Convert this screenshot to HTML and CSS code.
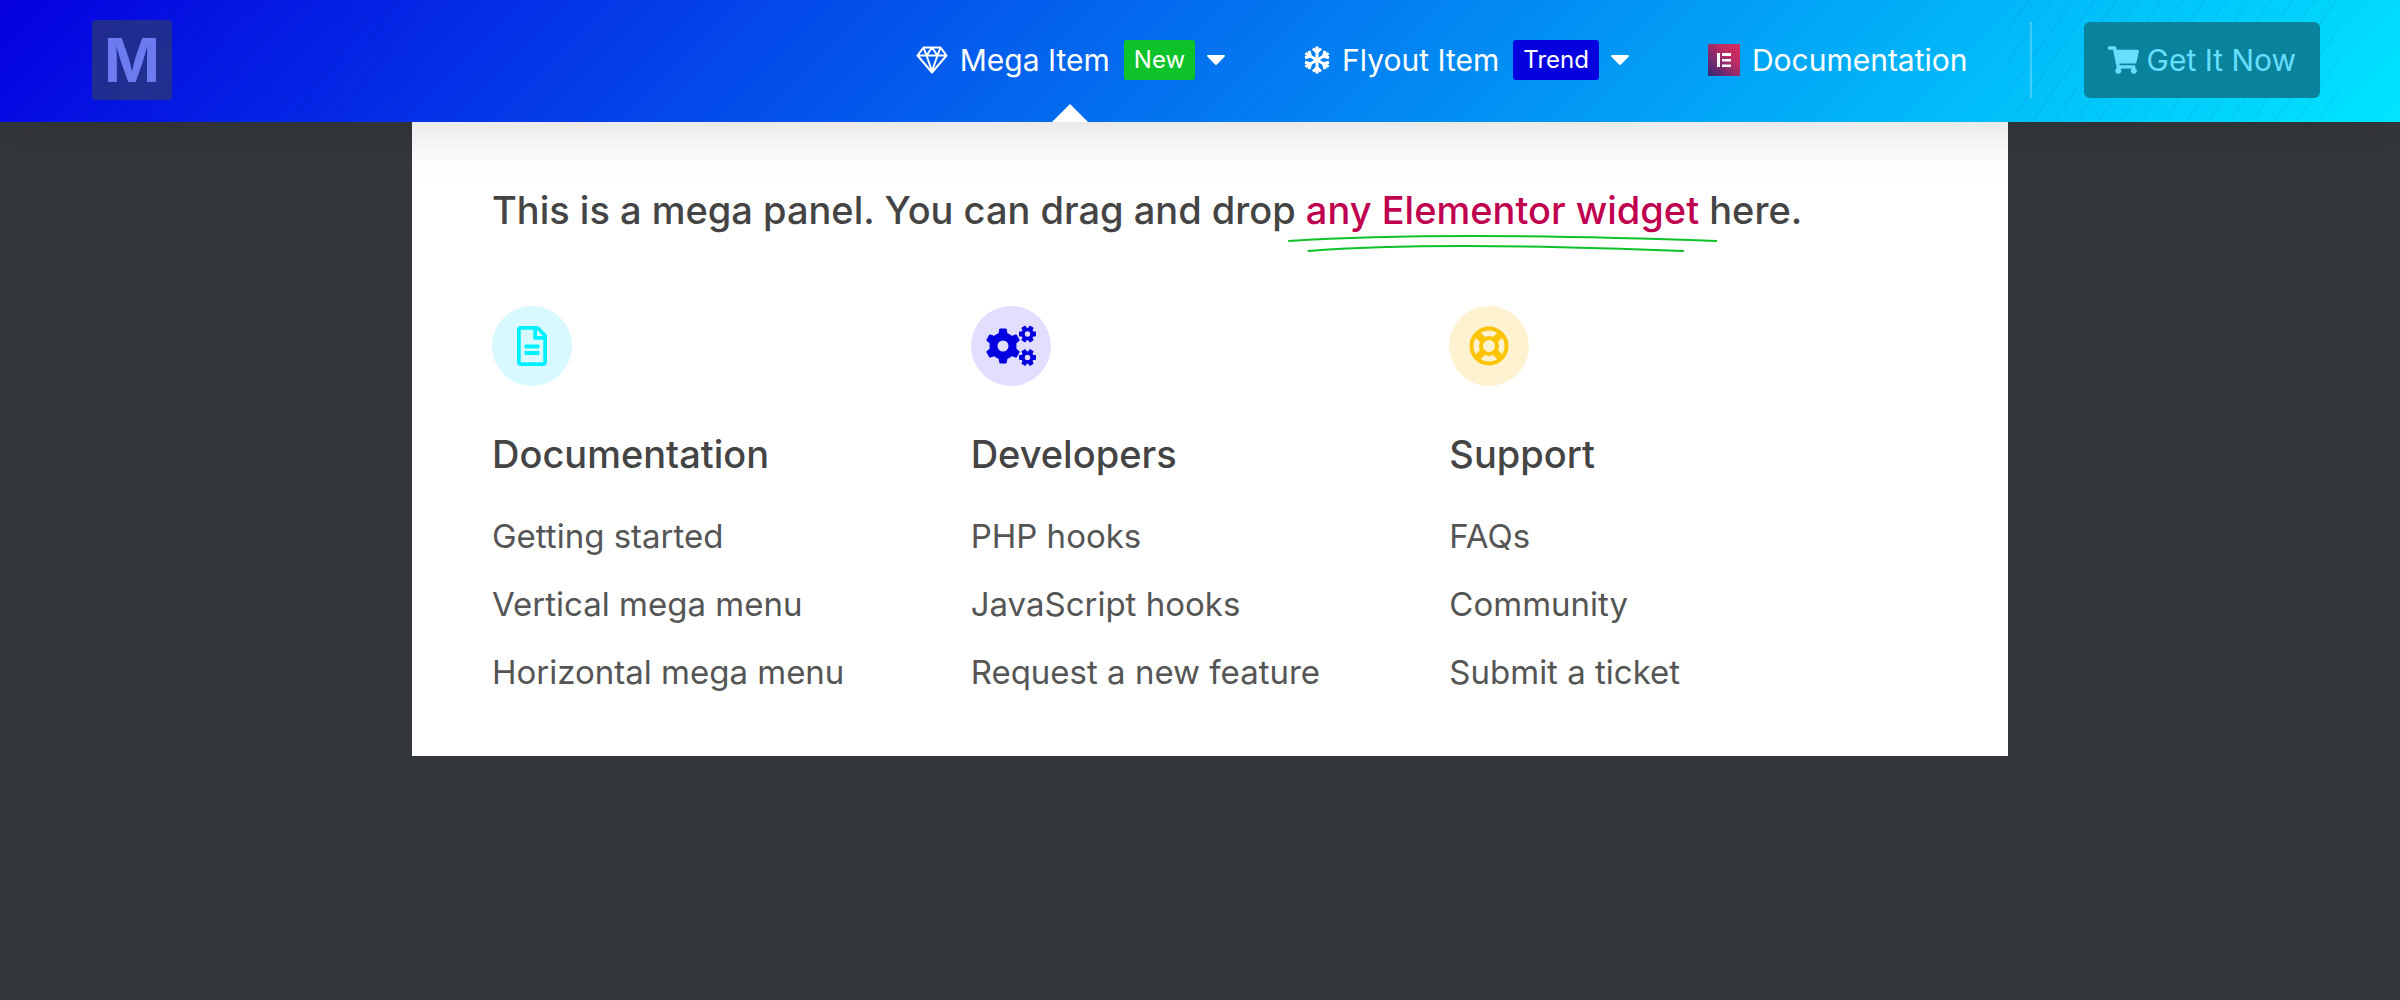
FILE: index.html
```html
<!DOCTYPE html>
<html lang="en">
<head>
<meta charset="utf-8">
<meta name="viewport" content="width=device-width, initial-scale=1">
<title>Mega Menu</title>
<link rel="stylesheet" href="styles.css">
</head>
<body>
<header class="header">
  <a class="logo" href="#">M</a>
  <nav class="nav" aria-label="Main">
    <a class="nav-item nav-item-open" href="#">
      <svg class="icon-gem" viewBox="0 0 32 28" aria-hidden="true"><path d="M7.500 1.500h17L30.500 9.500 16 26.500 1.500 9.500zM1.500 9.500h29M10.500 9.500 16 25l5.500-15.500M7.500 1.500l3 8 5.500-8 5.500 8 3-8"/></svg>
      <span class="nav-label">Mega Item</span>
      <span class="badge badge-new">New</span>
      <svg class="icon-caret" viewBox="0 0 18 10" aria-hidden="true"><path d="M1.200 0h15.600q2 .3.700 1.800l-7.300 7.500q-1.200 1.200-2.400 0L.5 1.800Q-.8.300 1.200 0z"/></svg>
    </a>
    <a class="nav-item" href="#">
      <svg class="icon-flake" viewBox="0 0 26 28" aria-hidden="true"><g id="arm"><path d="M13 14V.5M9 2.500l4 4 4-4"/></g><use href="#arm" transform="rotate(60 13 14)"/><use href="#arm" transform="rotate(120 13 14)"/><use href="#arm" transform="rotate(180 13 14)"/><use href="#arm" transform="rotate(240 13 14)"/><use href="#arm" transform="rotate(300 13 14)"/></svg>
      <span class="nav-label">Flyout Item</span>
      <span class="badge badge-trend">Trend</span>
      <svg class="icon-caret" viewBox="0 0 18 10" aria-hidden="true"><path d="M1.200 0h15.600q2 .3.700 1.800l-7.300 7.500q-1.200 1.200-2.400 0L.5 1.800Q-.8.300 1.200 0z"/></svg>
    </a>
    <a class="nav-item" href="#">
      <svg class="icon-elementor" viewBox="0 0 32 32" aria-hidden="true"><defs><linearGradient id="eg" x1="0" y1="1" x2="1" y2="0"><stop offset="0" stop-color="#32287c"/><stop offset=".65" stop-color="#bd2c63"/><stop offset="1" stop-color="#d92b5c"/></linearGradient></defs><rect width="32" height="32" rx="1" fill="url(#eg)"/><path fill="#fff" d="M9 9h3v14H9zM14 9h9v3h-9zM14 15h9v2.500h-9zM14 20.500h9V23h-9z"/></svg>
      <span class="nav-label">Documentation</span>
    </a>
  </nav>
  <div class="cta-wrap">
    <button class="cta" type="button">
      <svg class="icon-cart" viewBox="0 0 576 512" aria-hidden="true"><path d="M528.120 301.319l47.273-208C578.806 78.301 567.391 64 551.990 64H159.208l-9.166-44.810C147.758 8.021 137.930 0 126.529 0H24C10.745 0 0 10.745 0 24v16c0 13.255 10.745 24 24 24h69.883l70.248 343.435C147.325 417.100 136 435.222 136 456c0 30.928 25.072 56 56 56s56-25.072 56-56c0-15.674-6.447-29.835-16.824-40h209.647C430.447 426.165 424 440.326 424 456c0 30.928 25.072 56 56 56s56-25.072 56-56c0-22.172-12.888-41.332-31.579-50.405l5.517-24.276c3.413-15.018-8.002-29.319-23.403-29.319H218.117l-6.545-32h293.145c11.206 0 20.920-7.754 23.403-18.681z"/></svg>
      Get It Now
    </button>
  </div>
</header>
<main class="panel">
  <h1 class="panel-title">This is a mega panel. You can drag and drop <a class="highlight" href="#">any Elementor widget<svg class="underline" viewBox="0 0 442 18" preserveAspectRatio="none" aria-hidden="true"><path d="M1 6Q160-4 441 6M21 16Q150 6 407 16"/></svg></a> here.</h1>
  <div class="columns">
    <section class="column">
      <span class="disc disc-docs"><svg class="icon-file" viewBox="0 0 384 512" aria-hidden="true"><path d="M288 248v28c0 6.600-5.400 12-12 12H108c-6.600 0-12-5.400-12-12v-28c0-6.600 5.400-12 12-12h168c6.600 0 12 5.400 12 12zm-12 72H108c-6.600 0-12 5.400-12 12v28c0 6.600 5.400 12 12 12h168c6.600 0 12-5.400 12-12v-28c0-6.600-5.400-12-12-12zm108-188.100V464c0 26.500-21.500 48-48 48H48c-26.500 0-48-21.500-48-48V48C0 21.500 21.500 0 48 0h204.100C264.800 0 277 5.100 286 14.100L369.900 98c9 8.900 14.100 21.200 14.100 33.900zm-128-80V128h76.100L256 51.900zM336 464V176H232c-13.300 0-24-10.700-24-24V48H48v416h288z"/></svg></span>
      <h2>Documentation</h2>
      <ul>
        <li><a href="#">Getting started</a></li>
        <li><a href="#">Vertical mega menu</a></li>
        <li><a href="#">Horizontal mega menu</a></li>
      </ul>
    </section>
    <section class="column">
      <span class="disc disc-dev"><svg class="icon-cogs" viewBox="0 0 50 40" aria-hidden="true"><circle cx="17" cy="20" r="9.500" fill="none" stroke="currentColor" stroke-width="8"/><path id="tooth" d="M12.500 8 13.300 3.200Q13.500 2.500 14.500 2.500h5q1 0 1.200.7L21.500 8z"/><use href="#tooth" transform="rotate(60 17 20)"/><use href="#tooth" transform="rotate(120 17 20)"/><use href="#tooth" transform="rotate(180 17 20)"/><use href="#tooth" transform="rotate(240 17 20)"/><use href="#tooth" transform="rotate(300 17 20)"/><g id="cog"><circle cx="41.500" cy="8" r="4.500" fill="none" stroke="currentColor" stroke-width="3.600"/><path id="nub" d="M47 5.600h2.300q.7 0 .7.800v3.200q0 .8-.7.800H47z"/><use href="#nub" transform="rotate(60 41.500 8)"/><use href="#nub" transform="rotate(120 41.500 8)"/><use href="#nub" transform="rotate(180 41.500 8)"/><use href="#nub" transform="rotate(240 41.500 8)"/><use href="#nub" transform="rotate(300 41.500 8)"/></g><use href="#cog" y="23.500"/></svg></span>
      <h2>Developers</h2>
      <ul>
        <li><a href="#">PHP hooks</a></li>
        <li><a href="#">JavaScript hooks</a></li>
        <li><a href="#">Request a new feature</a></li>
      </ul>
    </section>
    <section class="column">
      <span class="disc disc-help"><svg class="icon-ring" viewBox="0 0 40 40" aria-hidden="true"><circle cx="20" cy="20" r="17.500" stroke-width="4"/><circle cx="20" cy="20" r="8" stroke-width="4"/><path stroke-width="7" d="M8.500 8.500l6 6M31.500 8.500l-6 6M8.500 31.500l6-6M31.500 31.500l-6-6"/></svg></span>
      <h2>Support</h2>
      <ul>
        <li><a href="#">FAQs</a></li>
        <li><a href="#">Community</a></li>
        <li><a href="#">Submit a ticket</a></li>
      </ul>
    </section>
  </div>
</main>
</body>
</html>
```
FILE: styles.css
```css
* { box-sizing: border-box; }

body {
  margin: 0;
  min-height: 100vh;
  background: #34373b;
  color: #444;
  font-family: Inter, "Liberation Sans", sans-serif;
}

a { color: inherit; text-decoration: none; }
svg { display: block; flex: none; overflow: visible; }
ul { margin: 0; padding: 0; list-style: none; }

.header {
  --stripes: repeating-linear-gradient(125deg, transparent 0 16px, rgba(0, 0, 60, .05) 17px 18px);
  position: relative;
  display: flex;
  align-items: center;
  height: 122px;
  padding: 0 80px 2px 92px;
  background:
    var(--stripes) 70px 0 / 342px 120px no-repeat,
    var(--stripes) right 60px top 0 / 332px 120px no-repeat,
    linear-gradient(135deg, #0500e0 0%, #00e5ff 100%);
  box-shadow: 0 0 60px rgba(0, 0, 0, .17);
  color: #fff;
}

.logo {
  display: flex;
  align-items: center;
  justify-content: center;
  width: 80px;
  height: 80px;
  border-radius: 4px;
  background: rgba(52, 65, 90, .6);
  color: #6c7bf0;
  font-size: 60px;
  font-weight: 700;
}

.nav {
  display: flex;
  align-self: stretch;
  gap: 79px;
  margin: 0 0 -2px auto;
  padding-bottom: 2px;
}

.nav-item {
  position: relative;
  display: flex;
  align-items: center;
  font-size: 30px;
}

.nav-item-open::after {
  content: "";
  position: absolute;
  bottom: -2px;
  left: 50%;
  margin-left: -18px;
  border: 18px solid transparent;
  border-top: 0;
  border-bottom-color: #fff;
}

.nav-label { margin-left: 12px; }

.badge {
  margin: 0 12px 0 14px;
  padding: 0 10px;
  border-radius: 3px;
  font-size: 24px;
  line-height: 40px;
}

.badge-new { background: #0ec22a; }
.badge-trend { background: #0500e0; }

.icon-gem { width: 32px; height: 28px; fill: none; stroke: #fff; stroke-width: 2; stroke-linejoin: round; }
.icon-flake { width: 26px; height: 28px; fill: none; stroke: #fff; stroke-width: 3; }
.icon-caret { width: 18px; height: 10px; fill: #fff; }
.icon-elementor { width: 32px; height: 32px; }

.cta-wrap {
  margin-left: 62px;
  padding-left: 52px;
  border-left: 2px solid rgba(255, 255, 255, .25);
}

.cta {
  display: flex;
  align-items: center;
  gap: 8px;
  height: 76px;
  padding: 0 24px;
  border: 0;
  border-radius: 6px;
  background: #09829c;
  color: #66dfff;
  font: inherit;
  font-size: 30px;
}

.icon-cart { width: 31px; height: 28px; fill: currentColor; }

.panel {
  margin: 0 392px 0 412px;
  padding: 58px 80px 50px;
  background: #fff;
}

.panel-title {
  margin: 0 0 66px;
  font-size: 38px;
  font-weight: 500;
  line-height: 60px;
}

.highlight { position: relative; color: #bf004f; }

.underline {
  position: absolute;
  top: 48px;
  left: -18px;
  width: calc(100% + 36px);
  height: 18px;
  fill: none;
  stroke: #0ec22a;
  stroke-width: 2;
  stroke-linecap: round;
}

.columns {
  display: grid;
  grid-template-columns: repeat(3, 1fr);
}

.disc {
  display: flex;
  align-items: center;
  justify-content: center;
  width: 80px;
  height: 80px;
  border-radius: 50%;
}

.disc-docs { background: #d8f9ff; color: #00f0ff; }
.disc-dev { background: #e2deff; color: #0500e0; }
.disc-help { background: #fff2d1; color: #fdc404; }

.icon-file { width: 30px; height: 40px; fill: currentColor; }
.icon-cogs { width: 50px; height: 40px; fill: currentColor; }
.icon-ring { width: 40px; height: 40px; fill: none; stroke: currentColor; }

.column h2 {
  margin: 44px 0 24px;
  font-size: 38px;
  font-weight: 500;
  line-height: 48px;
}

.column li {
  font-size: 33px;
  line-height: 68px;
  color: #555;
}
```
